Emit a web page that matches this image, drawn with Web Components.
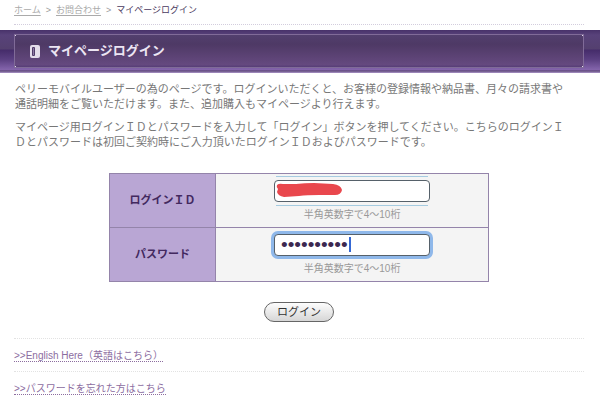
<!DOCTYPE html>
<html lang="ja">
<head>
<meta charset="UTF-8">
<meta name="viewport" content="width=device-width, initial-scale=1">
<title>マイページログイン</title>
<style>
  body {
    margin: 0;
    background: #fff;
    color: #777;
    font-family: "Liberation Sans", "Noto Sans CJK JP", sans-serif;
    font-size: 11px;
    line-height: 15px;
  }
</style>
</head>
<body>
<bread-crumb>
  <a href="#home">ホーム</a>
  <a href="#contact">お問合わせ</a>
  <span>マイページログイン</span>
</bread-crumb>
<page-title>マイページログイン</page-title>
<intro-text>
  <p>ペリーモバイルユーザーの為のページです。ログインいただくと、お客様の登録情報や納品書、月々の請求書や<br>通話明細をご覧いただけます。また、追加購入もマイページより行えます。</p>
  <p>マイページ用ログインＩＤとパスワードを入力して「ログイン」ボタンを押してください。こちらのログインＩ<br>Ｄとパスワードは初回ご契約時にご入力頂いたログインＩＤおよびパスワードです。</p>
</intro-text>
<login-form></login-form>
<link-row href="#english">&gt;&gt;English Here（英語はこちら）</link-row>
<link-row href="#forgot">&gt;&gt;パスワードを忘れた方はこちら</link-row>

<script>
class BreadCrumb extends HTMLElement {
  connectedCallback() {
    this.attachShadow({ mode: 'open' });
    this.shadowRoot.innerHTML = `
      <style>
        :host {
          display: block;
          padding: 0 16px 0 14px;
          font-size: 9px;
        }
        nav {
          display: flex;
          padding: 3px 0 6px;
          border-bottom: 1px dotted #d3cddd;
        }
        ::slotted(a) {
          color: #aaa;
          text-decoration: underline;
          text-underline-offset: 2px;
        }
        ::slotted(a)::after {
          content: '>';
          display: inline-block;
          padding: 0 5px;
          color: #999;
        }
        ::slotted(span) {
          color: #4a3a60;
        }
      </style>
      <nav aria-label="パンくず"><slot></slot></nav>
    `;
  }
}

class PageTitle extends HTMLElement {
  connectedCallback() {
    this.attachShadow({ mode: 'open' });
    this.shadowRoot.innerHTML = `
      <style>
        :host {
          display: block;
          margin-top: 5px;
          padding: 4px 16px 2px 14px;
          background: linear-gradient(#48326a 0, #58427a 5px, #54406f 19px, #452c6a 20px, #5c4183 30px, #8162a9 39px, #8565aa 40px, #53406d 41px, #9b85b8 42px);
        }
        .panel {
          display: flex;
          align-items: center;
          gap: 8px;
          height: 32px;
          padding-left: 15px;
          margin-bottom: 3px;
          border: 1px solid #806b98;
          background:
            linear-gradient(#e2d9ec, #e2d9ec) 0 0 / 2px 2px,
            linear-gradient(#e2d9ec, #e2d9ec) 100% 0 / 2px 2px,
            linear-gradient(#e2d9ec, #e2d9ec) 0 100% / 2px 2px,
            linear-gradient(#e2d9ec, #e2d9ec) 100% 100% / 2px 2px,
            linear-gradient(#53406f, #4e3965 30%, #65497f 90%, #503873);
          background-repeat: no-repeat;
          background-origin: border-box;
        }
        h1 {
          margin: 0;
          font-size: 13px;
          line-height: 20px;
          color: #ece5f3;
        }
      </style>
      <div class="panel">
        <svg width="10" height="13" viewBox="0 0 10 13" aria-hidden="true">
          <rect width="10" height="13" rx="2" fill="#e3dcea"/>
          <rect x="2" y="2" width="3" height="9" rx="1" fill="#513b6a"/>
          <rect x="3" y="3" width="1" height="7" fill="#8d7aa3"/>
        </svg>
        <h1><slot></slot></h1>
      </div>
    `;
  }
}

class IntroText extends HTMLElement {
  connectedCallback() {
    this.attachShadow({ mode: 'open' });
    this.shadowRoot.innerHTML = `
      <style>
        :host {
          display: flex;
          flex-direction: column;
          gap: 8px;
          padding: 9px 16px 0 15px;
        }
        ::slotted(p) {
          margin: 0;
        }
      </style>
      <slot></slot>
    `;
  }
}

class LoginForm extends HTMLElement {
  connectedCallback() {
    this.attachShadow({ mode: 'open' });
    this.shadowRoot.innerHTML = `
      <style>
        :host {
          display: block;
          padding: 23px 2px 16px 0;
        }
        form {
          display: flex;
          flex-direction: column;
          align-items: center;
          gap: 20px;
        }
        table {
          width: 64%;
          max-width: 380px;
          min-width: 300px;
          border-collapse: collapse;
        }
        th, td {
          box-sizing: border-box;
          height: 54px;
          padding: 0;
          border: 1px solid #9484aa;
          text-align: center;
        }
        th {
          width: 28%;
          background: #b9a6d4;
          color: #43295f;
        }
        td {
          background: #f4f4f4;
          vertical-align: top;
        }
        .field {
          position: relative;
          width: 156px;
          margin: 6px auto 5px;
        }
        input {
          display: block;
          box-sizing: border-box;
          width: 100%;
          height: 22px;
          padding: 0 6px;
          border: 1px solid #56616a;
          border-radius: 4px;
          outline: none;
          background: #fff;
          color: #3c2850;
          font: 11px "Liberation Sans", "Noto Sans CJK JP", sans-serif;
        }
        input[type="password"] {
          font-size: 19px;
          box-shadow: 0 0 0 3px #8fb8ea;
        }
        .lines::before, .lines::after {
          content: '';
          position: absolute;
          left: 2px;
          right: 2px;
          height: 1px;
          background: #a5cbe0;
        }
        .lines::before { top: -4px; }
        .lines::after { bottom: -4px; }
        .mark {
          position: absolute;
          left: 2px;
          top: 3px;
        }
        .caret {
          position: absolute;
          left: 75px;
          top: 3px;
          width: 2px;
          height: 15px;
          background: #3568d4;
        }
        .hint {
          display: block;
          font-size: 10px;
          color: #999;
        }
        button {
          width: 70px;
          height: 20px;
          padding: 0;
          border: 1px solid #666;
          border-radius: 10px;
          background: linear-gradient(#fdfdfd, #d6d6d6);
          color: #333;
          font: 11px/15px "Liberation Sans", "Noto Sans CJK JP", sans-serif;
        }
      </style>
      <form>
        <table>
          <tr>
            <th scope="row"><label for="login-id">ログインＩＤ</label></th>
            <td>
              <div class="field lines">
                <input id="login-id" type="text" aria-describedby="id-hint">
                <svg class="mark" width="67" height="14" viewBox="0 0 67 14" aria-hidden="true">
                  <path fill="#e9474d" d="M1 2 Q3 0 7 1 L20 1 Q29 0 38 0 L57 1 Q65 2 66 7 Q65 12 59 12 L43 12 Q31 12 23 13 L8 14 Q2 13 1 9 L2 6 Q0 4 1 2Z"/>
                </svg>
              </div>
              <span class="hint" id="id-hint">半角英数字で4～10桁</span>
            </td>
          </tr>
          <tr>
            <th scope="row"><label for="password">パスワード</label></th>
            <td>
              <div class="field">
                <input id="password" type="password" value="abcdefghij" aria-describedby="pw-hint">
                <span class="caret"></span>
              </div>
              <span class="hint" id="pw-hint">半角英数字で4～10桁</span>
            </td>
          </tr>
        </table>
        <button type="button">ログイン</button>
      </form>
    `;
  }
}

class LinkRow extends HTMLElement {
  connectedCallback() {
    this.attachShadow({ mode: 'open' });
    this.shadowRoot.innerHTML = `
      <style>
        :host {
          display: block;
          padding: 0 16px 0 14px;
          font-size: 10px;
          line-height: 11px;
        }
        div {
          padding: 11px 0 9px;
          border-top: 1px dotted #e2e2e2;
        }
        a {
          display: block;
          width: fit-content;
          color: #8c6d9f;
          text-decoration: none;
          border-bottom: 1px dotted #8c6d9f;
        }
      </style>
      <div><a href="${this.getAttribute('href')}"><slot></slot></a></div>
    `;
  }
}

customElements.define('bread-crumb', BreadCrumb);
customElements.define('page-title', PageTitle);
customElements.define('intro-text', IntroText);
customElements.define('login-form', LoginForm);
customElements.define('link-row', LinkRow);
</script>
</body>
</html>
